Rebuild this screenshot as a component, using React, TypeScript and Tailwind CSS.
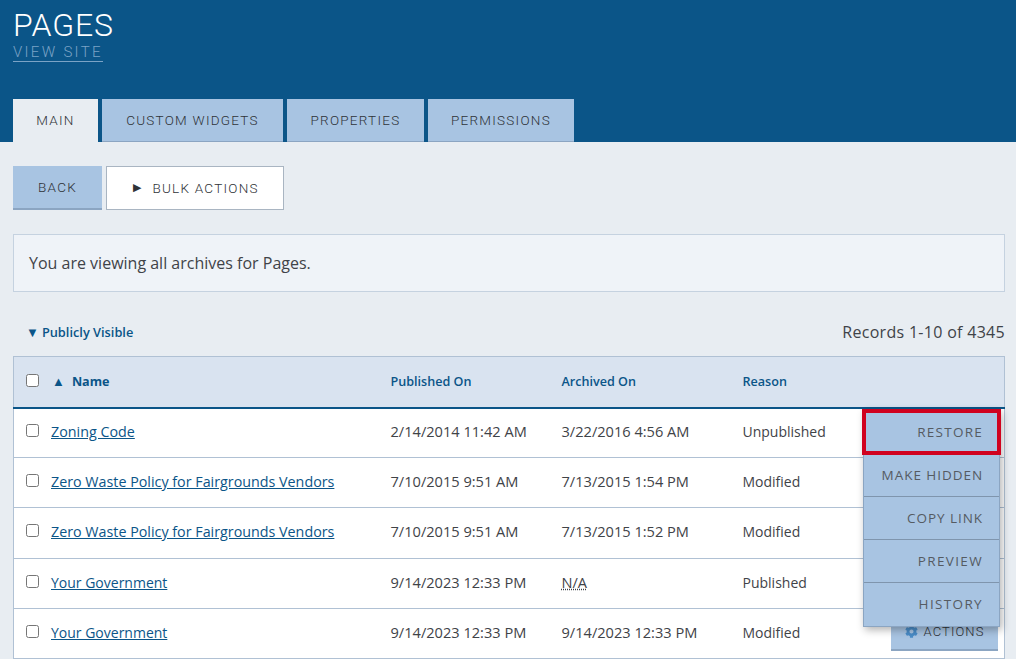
import React from 'react';
import { FaCog } from 'react-icons/fa';

const din = "font-['Roboto',sans-serif]";

const rows = [
  { name: 'Zoning Code', published: '2/14/2014 11:42 AM', archived: '3/22/2016 4:56 AM', reason: 'Unpublished' },
  { name: 'Zero Waste Policy for Fairgrounds Vendors', published: '7/10/2015 9:51 AM', archived: '7/13/2015 1:54 PM', reason: 'Modified' },
  { name: 'Zero Waste Policy for Fairgrounds Vendors', published: '7/10/2015 9:51 AM', archived: '7/13/2015 1:52 PM', reason: 'Modified' },
  { name: 'Your Government', published: '9/14/2023 12:33 PM', archived: 'N/A', reason: 'Published' },
  { name: 'Your Government', published: '9/14/2023 12:33 PM', archived: '9/14/2023 12:33 PM', reason: 'Modified' },
];

const tabs = ['Custom Widgets', 'Properties', 'Permissions'];
const menuItems = ['Make Hidden', 'Copy Link', 'Preview', 'History'];

function Checkbox({ className }: { className: string }) {
  return <input type="checkbox" className={`appearance-none w-[13px] h-[13px] bg-white border border-[#767676] rounded-[2.5px] block ${className}`} />;
}

export default function App() {
  return (
    <div className="h-[659px] overflow-hidden bg-[#e8edf2] font-['Open_Sans',sans-serif] text-[#3f4348]">
      <header className="h-[142px] bg-[#0b5588] px-[13px] flex flex-col">
        <h1 className={`${din} text-[32px] leading-[38px] mt-[6px] text-white tracking-[0.9px] font-light`}>PAGES</h1>
        <a className={`${din} self-start text-[15px] leading-[17px] tracking-[2.3px] text-[#7ba3c6] border-b border-[#7ba3c6] font-light`}>VIEW SITE</a>
        <nav className={`${din} mt-auto flex gap-[4px] text-[13.5px] tracking-[1.25px] uppercase font-light text-[#2f3338]`}>
          <div className="w-[85px] h-[43px] flex items-center justify-center bg-[#e8edf2]">Main</div>
          {tabs.map((t, i) => (
            <div key={t} className={`h-[43px] flex items-center justify-center bg-[#a8c4e2] border-b border-[#8ba5c2] ${i === 0 ? 'w-[181px]' : i === 1 ? 'w-[137px]' : 'w-[146px]'}`}>{t}</div>
          ))}
        </nav>
      </header>

      <main className="pr-[11px] pl-[13px]">
        <div className={`${din} flex gap-[4px] mt-[24px] text-[13.5px] tracking-[1.25px] uppercase font-light text-[#2f3338]`}>
          <button className="w-[89px] h-[44px] bg-[#a8c4e2] border-b-2 border-[#8ba5c2]">BACK</button>
          <button className="w-[178px] h-[44px] bg-white border border-[#a9b5c2] flex items-center justify-center gap-[10px] pl-[2px]">
            <span className="text-[11px]">▶</span>BULK ACTIONS
          </button>
        </div>

        <div className="mt-[24px] h-[58px] flex items-center pl-[15px] bg-[#eff3f8] border border-[#c5d2e0] text-[16px]">You are viewing all archives for Pages.</div>

        <div className="mt-[31px] h-[20px] flex items-center justify-between">
          <div className="pl-[13px] flex items-center gap-[3px] text-[12.8px] font-semibold text-[#0b5588]"><span className="text-[13px]">▼</span>Publicly Visible</div>
          <div className="text-[16px] tracking-[0.3px] pb-[2px]">Records 1-10 of 4345</div>
        </div>

        <div className="relative mt-[13px]">
          <table className="w-full table-fixed border-collapse text-[14.3px] bg-white border border-[#b0c1d4]">
            <thead>
              <tr className="h-[51px] bg-[#d9e3f0] border-b-2 border-[#0b5588] text-[12.6px] font-semibold text-[#0b5588] text-left">
                <th className="w-[377px] pl-[12px]">
                  <div className="flex items-center">
                    <Checkbox className="mb-[2px]" />
                    <span className="ml-[13px] text-[13px]">▲</span>
                    <span className="ml-[7px] mt-[2px]">Name</span>
                  </div>
                </th>
                <th className="w-[171px] font-semibold pt-[2px]">Published On</th>
                <th className="w-[181px] font-semibold pt-[2px]">Archived On</th>
                <th className="font-semibold pt-[2px]">Reason</th>
              </tr>
            </thead>
            <tbody>
              {rows.map((r, i) => {
                // the third row is a pixel taller in the picture, its text stays high
                const pad = i === 2 ? 'pb-[3px]' : 'pb-[2px]';
                return (
                  <tr key={i} className={`border-b border-[#b0c1d4] ${i === 2 ? 'h-[51px]' : 'h-[50px]'}`}>
                    <td className={`pl-[12px] ${pad}`}>
                      <div className="flex items-center">
                        <Checkbox className="mb-[2px]" />
                        <a className={`ml-[12px] text-[#0b5588] underline ${i > 2 ? 'text-[14px]' : ''}`}>{r.name}</a>
                      </div>
                    </td>
                    <td className={`${pad} text-[14.6px]`}>{r.published}</td>
                    <td className={`${pad} text-[14.6px]`}>{r.archived === 'N/A' ? <span className="underline decoration-dotted">N/A</span> : r.archived}</td>
                    <td className={`${pad} text-[14px]`}>
                      <div className="flex items-center justify-between pr-[6px]">
                        {r.reason}
                        {i === rows.length - 1 && (
                          <button className={`${din} w-[107px] h-[37px] bg-[#a8c4e2] border-b-2 border-[#8ba5c2] flex items-center justify-center gap-[6px] text-[13px] tracking-[1.1px] font-light text-[#2f3338]`}>
                            <FaCog size={13} className="text-[#4a8cc7]" />ACTIONS
                          </button>
                        )}
                      </div>
                    </td>
                  </tr>
                );
              })}
            </tbody>
          </table>

          <div className="absolute top-[53px] right-[5px] w-[137px] bg-[#a8c4e2] border-x border-b border-[#8ba5c2] shadow-[2px_3px_8px_rgba(0,0,0,0.3)] text-[13.5px] tracking-[0.95px] uppercase text-right text-[#555b62]">
            <div className="h-[46px] -mx-[2px] w-[139px] flex items-center justify-end pr-[14px] border-[4px] border-[#d0021f] tracking-[1.25px]">Restore</div>
            {menuItems.map((m, i) => (
              <div key={m} className={`flex items-center justify-end pr-[16px] ${i === 0 ? 'h-[42px]' : 'h-[43px]'} ${i < 3 ? 'border-b border-[#7f95ad]' : ''} ${i >= 2 ? 'tracking-[1.35px]' : ''}`}>{m}</div>
            ))}
          </div>
        </div>
      </main>
    </div>
  );
}
